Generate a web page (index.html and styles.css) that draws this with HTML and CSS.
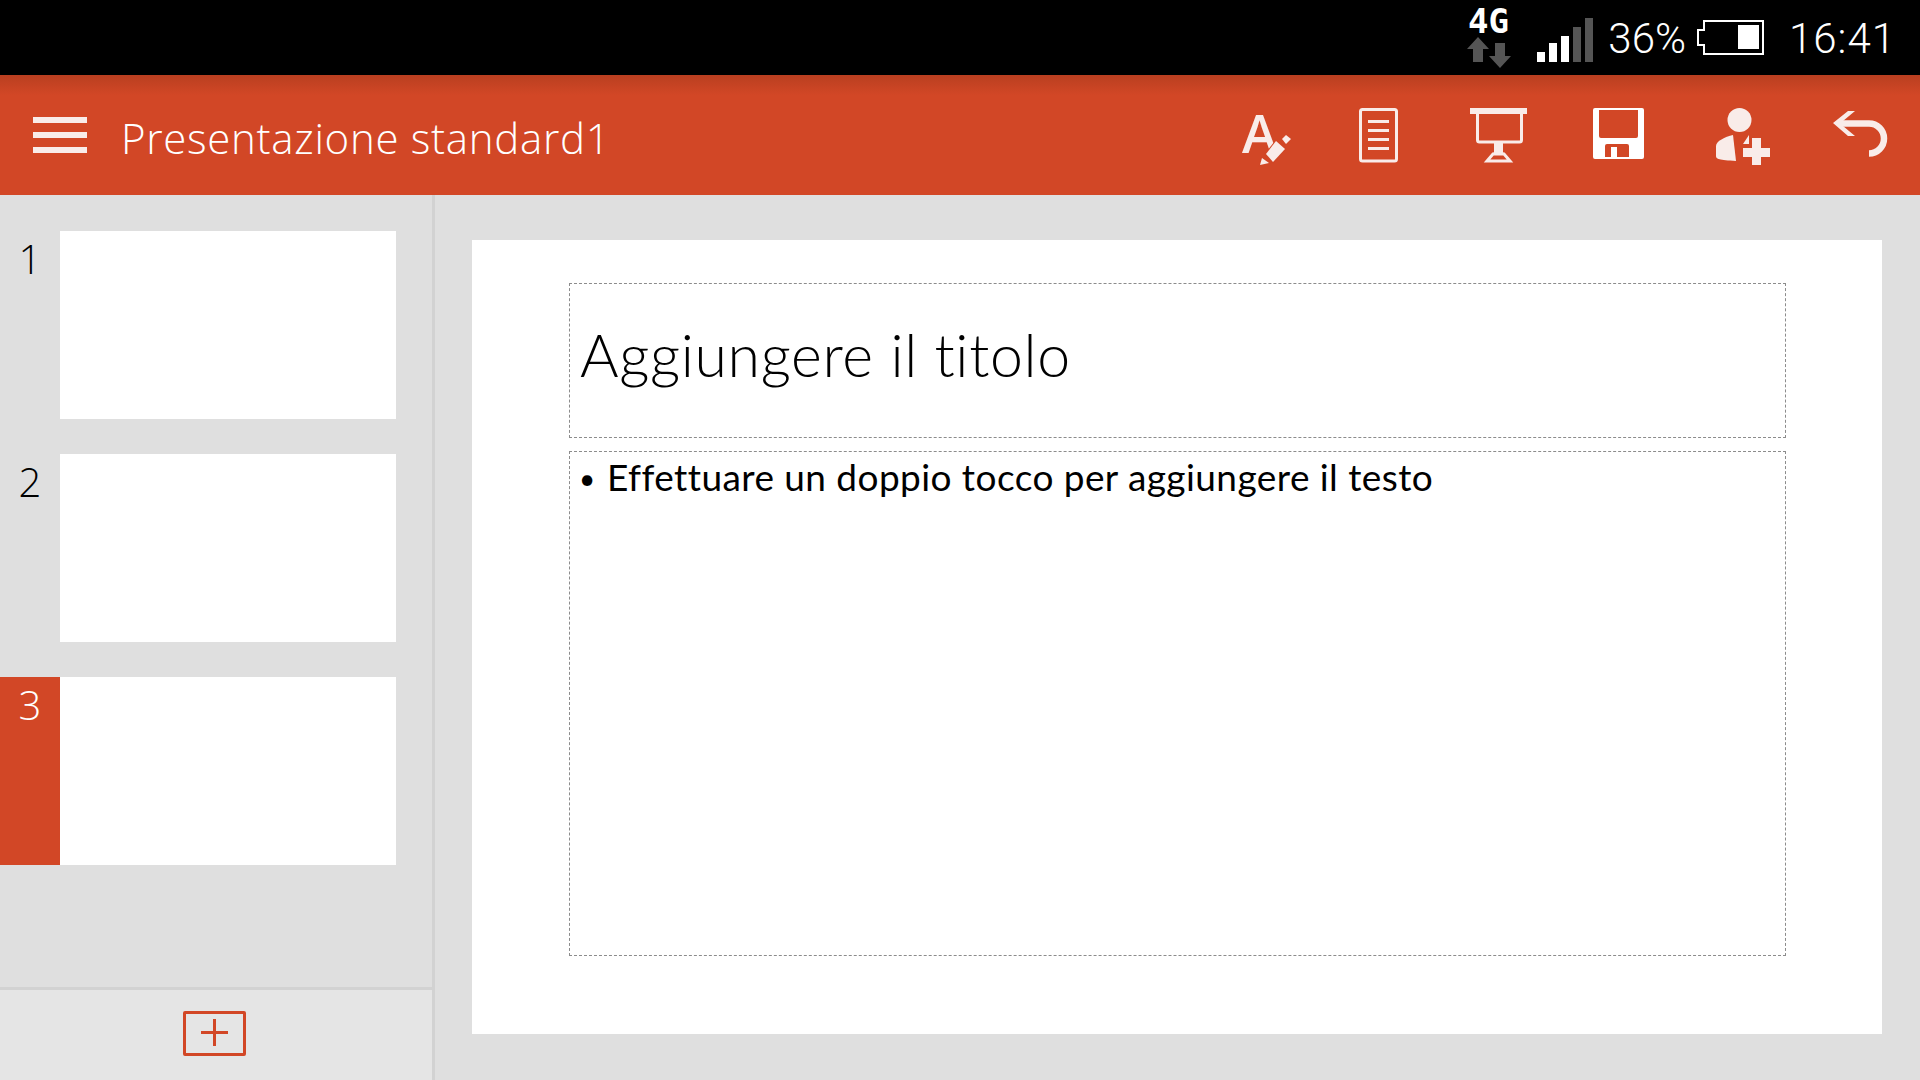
FILE: index.html
```html
<!DOCTYPE html>
<html lang="it">
<head>
<meta charset="utf-8">
<title>Presentazione standard1</title>
<link rel="stylesheet" href="styles.css">
</head>
<body>
<div class="app">
  <header class="status">
    <svg class="net" viewBox="1460 0 60 75" width="60" height="75">
      <text class="net-type" x="1467" y="33" textLength="41" lengthAdjust="spacingAndGlyphs">4G</text>
      <path class="dim" d="M1477 37 1466 49h6v13h10V49h6z"/>
      <path class="dim" d="M1499 68 1510 56h-6V43h-10v13h-6z"/>
    </svg>
    <svg class="signal" viewBox="1536 0 56 75" width="56" height="75">
      <rect class="on" x="1536" y="52" width="8" height="10"/>
      <rect class="on" x="1548" y="43" width="8" height="19"/>
      <rect class="on" x="1560" y="36" width="8" height="26"/>
      <rect class="dim" x="1572" y="27" width="8" height="35"/>
      <rect class="dim" x="1584" y="18" width="8" height="44"/>
    </svg>
    <span class="status-text pct">36%</span>
    <svg class="battery" viewBox="1696 0 70 75" width="70" height="75">
      <path class="outline" d="M1704 21h59v33h-59V45h-6V30h6z"/>
      <rect class="on" x="1738" y="25" width="21" height="24"/>
    </svg>
    <span class="status-text time">16:41</span>
  </header>

  <nav class="ribbon">
    <div class="menu" aria-label="Menu"><span></span><span></span><span></span></div>
    <div class="doc-title">Presentazione standard1</div>
    <div class="tools">
      <svg class="tool" viewBox="1199 75 120 120" width="120" height="120">
        <text class="tool-letter" x="1242" y="153">A</text>
        <path class="fg knock" d="M1266 154l10-13 9 8-12 13z"/>
        <path class="fg knock" d="M1260 165l2-7 7 5z"/>
        <path class="fg" d="M1282 139l4-4 5 4-5 5z"/>
      </svg>
      <svg class="tool" viewBox="1319 75 120 120" width="120" height="120">
        <rect class="line" x="1360.5" y="109.5" width="36" height="51.500" rx="2"/>
        <path class="fg" d="M1368 120h21v3h-21zM1368 129h21v3h-21zM1368 138h21v3h-21zM1368 147h21v3h-21z"/>
      </svg>
      <svg class="tool" viewBox="1439 75 120 120" width="120" height="120">
        <path class="fg" d="M1470 108h57v6h-57z"/>
        <path class="line" d="M1477.500 112v28a2 2 0 0 0 2 2h40a2 2 0 0 0 2-2v-28"/>
        <path class="fg" d="M1494 143h9v9l2 3h-13l2-3z"/>
        <path class="line" d="M1493 154h11l6 7h-23z"/>
      </svg>
      <svg class="tool" viewBox="1559 75 120 120" width="120" height="120">
        <path class="solid" fill-rule="evenodd" d="M1595 108h47a2 2 0 0 1 2 2v47a2 2 0 0 1-2 2h-47a2 2 0 0 1-2-2v-47a2 2 0 0 1 2-2zM1599 110v26a2 2 0 0 0 2 2h35a2 2 0 0 0 2-2v-26zM1607 144a2 2 0 0 0-2 2v11h6v-10h6v10h12v-11a2 2 0 0 0-2-2z"/>
      </svg>
      <svg class="tool" viewBox="1679 75 120 120" width="120" height="120">
        <circle class="fg" cx="1739.500" cy="120" r="12"/>
        <path class="fg" d="M1733 135c-8 2-17 6-17 11v10c0 3 3 4 20 5z"/>
        <path class="fg" d="M1743 144l6-9v9z"/>
        <path class="fg" d="M1752 138h9v15h-9zM1743 148h27v9h-27zM1752 153h9v12h-9z"/>
      </svg>
      <svg class="tool" viewBox="1799 75 120 120" width="120" height="120">
        <path class="fg" d="M1833 123l15-12h7l-12 10v5l12 10h-7z"/>
        <path class="arc" d="M1842 123.500h27a15 15 0 0 1 0 30"/>
      </svg>
    </div>
  </nav>

  <div class="workspace">
    <aside class="sidebar">
      <ol class="slides">
        <li class="slide-row"><span class="slide-num">1</span><div class="thumb"></div></li>
        <li class="slide-row"><span class="slide-num">2</span><div class="thumb"></div></li>
        <li class="slide-row is-active"><span class="slide-num">3</span><div class="thumb"></div></li>
      </ol>
      <footer class="side-foot">
        <div class="add-slide"><span class="plus-h"></span><span class="plus-v"></span></div>
      </footer>
    </aside>
    <main class="stage">
      <section class="slide">
        <div class="ph ph-title"><h1 class="title-text">Aggiungere il titolo</h1></div>
        <div class="ph ph-body"><p class="body-text"><span class="bullet">•</span>Effettuare un doppio tocco per aggiungere il testo</p></div>
      </section>
    </main>
  </div>
</div>
</body>
</html>
```
FILE: styles.css
```css
* { box-sizing: border-box; }
html, body { margin: 0; padding: 0; }
body { width: 1920px; height: 1080px; overflow: hidden; background: #dfdfdf; font-family: "Open Sans", sans-serif; }
.app { display: flex; flex-direction: column; width: 1920px; height: 1080px; }

.status { display: flex; justify-content: flex-end; align-items: center; height: 75px; flex: none; background: #000; color: #fff; padding-right: 24px; }
.status svg { display: block; flex: none; }
.net { margin-right: 16px; }
.signal { margin-right: 15px; }
.net-type { font: bold 33px "DejaVu Sans Mono", monospace; fill: #fff; }
.dim { fill: #555; }
.on { fill: #fff; }
.outline { fill: none; stroke: #fff; stroke-width: 2; }
.status-text { padding-top: 2px; font: 300 42px/80px Roboto, sans-serif; white-space: nowrap; }
.pct { margin-right: 10px; }
.time { margin-left: 23px; letter-spacing: 1px; }

.ribbon { display: flex; align-items: center; height: 120px; flex: none; color: #fff; padding: 0 1px 0 33px;
  background: linear-gradient(#b93f20 0, #d24726 20px); }
.menu { display: flex; flex-direction: column; gap: 9px; width: 54px; flex: none; }
.menu span { display: block; height: 6px; background: #f9ece9; }
.doc-title { flex: 1; margin-left: 34px; padding-top: 5px; font: 300 42px/60px "Open Sans", sans-serif; letter-spacing: .7px; white-space: nowrap; }
.tools { display: flex; flex: none; }
.tool { display: block; flex: none; }
.fg { fill: #f9ece9; }
.solid { fill: #fff; }
.line { fill: none; stroke: #f9ece9; stroke-width: 3; }
.arc { fill: none; stroke: #f9ece9; stroke-width: 6.500; }
.tool-letter { font: 600 53px "Open Sans", sans-serif; fill: #f9ece9; }
.knock { stroke: #d24726; stroke-width: 2; paint-order: stroke; }

.workspace { display: flex; flex: 1; min-height: 0; }
.sidebar { display: flex; flex-direction: column; width: 435px; flex: none; border-right: 3px solid #d2d2d2; }
.slides { list-style: none; margin: 0; padding: 36px 0 0; flex: 1; display: flex; flex-direction: column; gap: 35px; }
.slide-row { display: flex; height: 188px; }
.slide-num { width: 60px; flex: none; text-align: center; padding-top: 3px; font: 300 40px/50px "Open Sans", sans-serif; color: #000; }
.thumb { width: 336px; background: #fff; }
.is-active .slide-num { background: #d24726; color: #fff; }
.side-foot { display: flex; justify-content: flex-start; height: 93px; flex: none; padding: 21px 0 0 183px; background: #e5e5e5; border-top: 3px solid #d2d2d2; }
.add-slide { position: relative; width: 63px; height: 45px; border: 3px solid #d24726; border-radius: 2px; }
.plus-h { position: absolute; left: 15px; top: 17px; width: 27px; height: 3px; background: #d24726; }
.plus-v { position: absolute; left: 27px; top: 5px; width: 3px; height: 27px; background: #d24726; }

.stage { flex: 1; padding: 45px 0 0 37px; }
.slide { display: flex; flex-direction: column; gap: 13px; width: 1410px; height: 794px; padding: 43px 0 0 97px; background: #fff; }
.ph { width: 1217px; border: 1px dashed #8c8c8c; }
.ph-title { display: flex; align-items: center; height: 155px; padding: 0 0 11px 10px; }
.ph-body { height: 505px; padding: 0 0 0 11px; }
.title-text { margin: 0; font: 300 59px/70px Lato, sans-serif; letter-spacing: .65px; color: #000; }
.body-text { margin: 0; font: 400 37px/50px Lato, sans-serif; letter-spacing: .43px; color: #000; white-space: nowrap; }
.bullet { display: inline-block; width: 26px; margin-left: -2px; margin-right: 2px; font-size: 28px; vertical-align: 2px; }
```
